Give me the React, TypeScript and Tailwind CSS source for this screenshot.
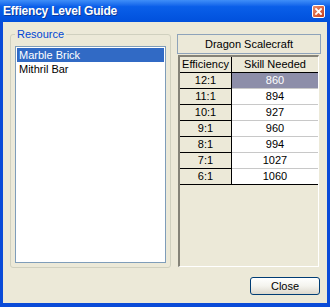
import React from 'react';

const rows: [string, string][] = [
  ['12:1', '860'],
  ['11:1', '894'],
  ['10:1', '927'],
  ['9:1', '960'],
  ['8:1', '994'],
  ['7:1', '1027'],
  ['6:1', '1060'],
];

const App: React.FC = () => {
  return (
    <div className="w-[330px] h-[307px] flex flex-col font-['Liberation_Sans',Arial,sans-serif] text-[11px] text-black select-none">
      {/* title bar */}
      <div className="h-[22px] flex items-center justify-between pl-[3px] pr-[5px] bg-linear-to-b from-[#3f8ef8] via-[#0a5fe9] via-30% to-[#0150dc]">
        <span className="text-white font-bold text-[12px] tracking-[-0.2px] [text-shadow:1px_1px_#0b3a9c]">Effiency Level Guide</span>
        <div className="w-[13px] h-[13px] rounded-[2px] border border-white bg-linear-to-br from-[#ea8d6c] to-[#c43c1a] flex items-center justify-center">
          <svg width="7" height="7" viewBox="0 0 7 7">
            <path d="M1 1 L6 6 M6 1 L1 6" stroke="white" strokeWidth="1.8" strokeLinecap="square" />
          </svg>
        </div>
      </div>

      {/* body */}
      <div className="flex-1 bg-[#ece9d8] border-x-[3px] border-b-[4px] border-[#0a4bd8] flex flex-col">
        <div className="flex pt-[6px] pl-[7px]">
          {/* resource group */}
          <fieldset className="w-[161px] h-[240px] border border-[#d0d0bf] rounded-[3px] px-[4px] pb-[4px] flex flex-col">
            <legend className="px-[2px] text-[#0046d5] leading-[13px]">Resource</legend>
            <div className="mt-[5px] flex-1 bg-white border border-[#7f9db9] p-[1px]">
              <div className="h-[14px] leading-[14px] pl-[2px] bg-[#316ac5] text-white">Marble Brick</div>
              <div className="h-[14px] leading-[14px] pl-[2px]">Mithril Bar</div>
            </div>
          </fieldset>

          {/* right column */}
          <div className="ml-[6px] w-[144px] pt-[6px] flex flex-col">
            <div className="h-[20px] border border-[#8ea3ba] flex items-center justify-center">Dragon Scalecraft</div>
            <div className="mt-[1px] ml-[1px] mr-[2px] h-[212px] border-l-2 border-t-2 border-l-[#858378] border-t-[#858378] border-r border-b border-r-white border-b-white flex flex-col">
              <div className="flex h-[16px]">
                <div className="w-[52px] border-r border-b border-black flex items-center justify-center">Efficiency</div>
                <div className="flex-1 border-b border-black flex items-center justify-center">Skill Needed</div>
              </div>
              {rows.map(([eff, skill], i) => (
                <div key={eff} className="flex h-[16px]">
                  <div className="w-[52px] border-r border-b border-black flex items-center justify-center">{eff}</div>
                  <div
                    className={
                      i === 0
                        ? 'flex-1 border-b border-[#c8c8c8] bg-[#8d8ea9] text-white flex items-center justify-center'
                        : i === rows.length - 1
                        ? 'flex-1 border-b border-black bg-white flex items-center justify-center'
                        : 'flex-1 border-b border-[#c8c8c8] bg-white flex items-center justify-center'
                    }
                  >
                    {skill}
                  </div>
                </div>
              ))}
            </div>
          </div>
        </div>

        <div className="mt-[9px] flex justify-end pr-[7px]">
          <button className="w-[70px] h-[18px] rounded-[3px] border border-[#003c74] bg-linear-to-b from-white via-[#f4f3ee] to-[#dcd8cc] flex items-center justify-center leading-none">
            Close
          </button>
        </div>
      </div>
    </div>
  );
};

export default App;
